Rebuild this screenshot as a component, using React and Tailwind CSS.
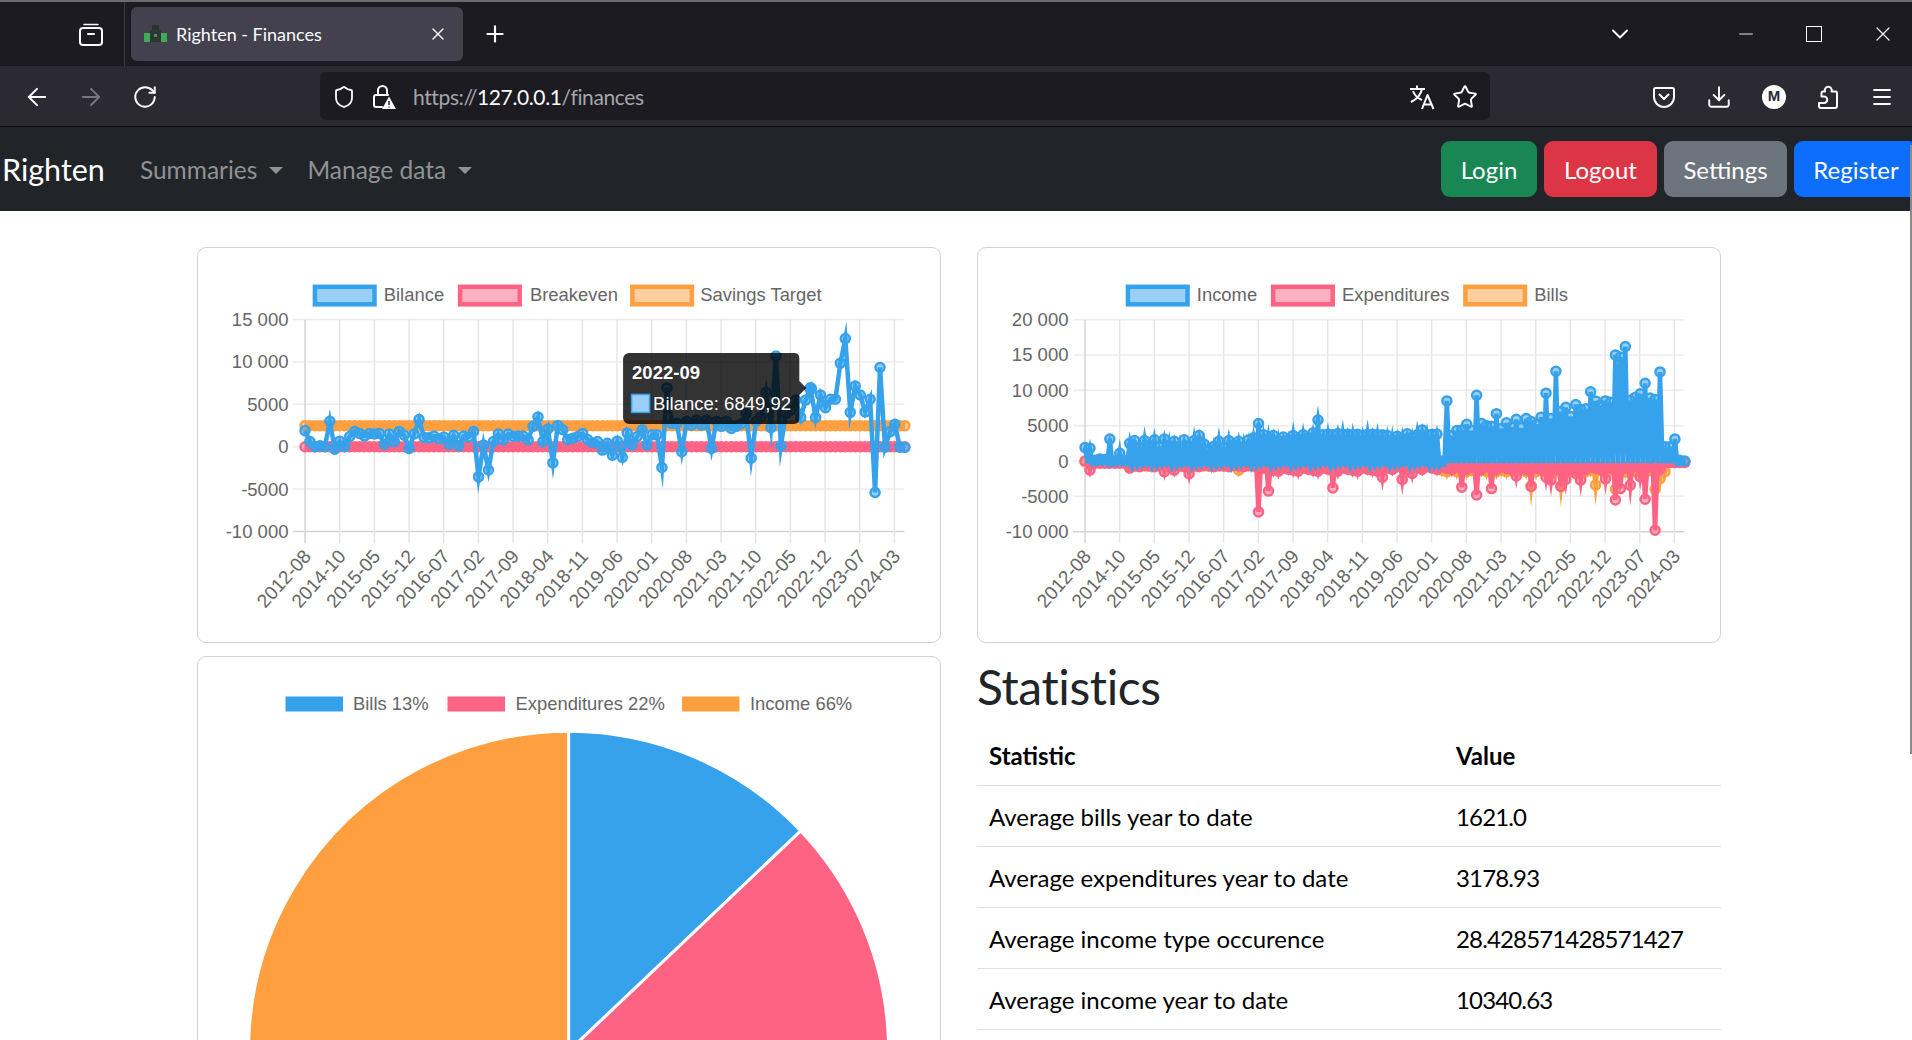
import { ArrowLeft, ArrowRight, RotateCw, Shield, Star, Download, Menu, ChevronDown, Minus, X, Plus } from "lucide-react";

const UI = "font-['Lato',sans-serif]";
const BLUE = "#36a2eb";
const PINK = "#ff6384";
const ORANGE = "#ff9f40";
const LIGHT = { [BLUE]: "rgba(54,162,235,0.5)", [PINK]: "rgba(255,99,132,0.5)", [ORANGE]: "rgba(255,159,64,0.5)" };

const xLabels = ["2012-08", "2014-10", "2015-05", "2015-12", "2016-07", "2017-02", "2017-09", "2018-04", "2018-11", "2019-06", "2020-01", "2020-08", "2021-03", "2021-10", "2022-05", "2022-12", "2023-07", "2024-03"];

const bilance = [1900, 600, 0, 100, 0, 3000, -300, 650, 0, 1200, 1800, 1550, 1250, 1550, 1500, 1550, 300, 1500, 600, 1800, 1350, -200, 1500, 3200, 1100, 1050, 1250, 950, 1150, 300, 1350, 100, 1250, 1150, 1800, -3550, 200, -2750, 600, 1500, 800, 1500, 1200, 1250, 1250, 800, 2400, 3500, 600, 2100, -1900, 2500, 2000, 850, 1000, 1200, 1550, 850, 450, 600, -400, 400, -1000, 650, -1250, 1600, 200, 1200, 2000, 200, 1400, 1400, -2450, 6950, 2750, 2750, -600, 3000, 2550, 3150, 2550, 3150, -200, 3000, 2400, 3000, 2150, 2400, 2700, 3900, -1350, 3000, 3550, 6400, 2250, 10700, 100, 3900, 4300, 5500, 3450, 5500, 6850, 3450, 6100, 4600, 5600, 5600, 9850, 12750, 4050, 7150, 6100, 4100, 5600, -5400, 9350, -50, 1750, 2650, -50, -100];

const income = [1900, 1800, 100, 300, 200, 3100, 0, 1100, 100, 2500, 2900, 1900, 2900, 2200, 3000, 2000, 3100, 2200, 2800, 2000, 3000, 2100, 2900, 3600, 2400, 1600, 2100, 2800, 1900, 2900, 2300, 2800, 2000, 3000, 3300, 5300, 3700, 3200, 3600, 2900, 3400, 3000, 3600, 3100, 3700, 3300, 4000, 5800, 3700, 3800, 3700, 3900, 3800, 3800, 3700, 3800, 3600, 3800, 3800, 3700, 3700, 3600, 3000, 3500, 3200, 3850, 3400, 3700, 4400, 3700, 3800, 3800, 0, 8500, 3600, 4300, 4400, 5200, 4300, 9300, 5300, 5000, 4900, 6700, 4600, 5400, 4800, 5900, 4700, 6000, 5600, 5200, 6200, 9600, 6000, 12700, 7000, 7600, 6300, 8000, 7300, 7400, 9800, 8500, 7900, 8500, 8300, 15000, 14700, 16200, 8600, 9000, 9500, 11000, 8900, 8700, 12600, 2000, 2000, 3100, 100, 0];

const expOverrides = { 0: 0, 1: -1300, 9: -1000, 16: -1500, 18: -1300, 21: -1800, 35: -7200, 37: -4250, 50: -3800, 60: -2300, 64: -2600, 66: -1750, 76: -3700, 79: -4800, 82: -3900, 87: -2100, 90: -3600, 93: -2300, 94: -2700, 96: -3600, 97: -2600, 99: -1750, 100: -2700, 105: -2550, 107: -5500, 108: -3900, 110: -3400, 112: -2200, 113: -5400, 115: -9800 };
const expenditures = income.map((_, i) => {
  if (expOverrides[i] !== undefined) return expOverrides[i];
  if (i < 9) return -300;
  if (i > 116) return -200;
  if (i < 35) return -600 - (i % 3) * 100;
  if (i < 60) return -1000 - (i % 4) * 150;
  return -800 - (i % 3) * 200;
});

const billOverrides = { 31: -1300, 90: -3500, 96: -3500, 103: -3400, 107: -4000, 115: -4000, 116: -2500 };
const bills = income.map((_, i) => {
  if (billOverrides[i] !== undefined) return billOverrides[i];
  if (i < 9 || i > 117) return -100;
  return i < 72 ? -700 : -1300 - (i % 2) * 200;
});

// plain polyline
function linePath(values, left, step, toY) {
  return values.map((v, i) => `${i ? "L" : "M"}${(left + i * step).toFixed(2)} ${toY(v).toFixed(2)}`).join(" ");
}

// the dense series swing back towards zero between two months
function zigzagPath(values, left, step, toY, rest) {
  return values.map((v, i) => {
    const x = left + i * step;
    const back = i < values.length - 1 ? ` L${(x + step / 2).toFixed(2)} ${toY(rest(i)).toFixed(2)}` : "";
    return `${i ? "L" : "M"}${x.toFixed(2)} ${toY(v).toFixed(2)}${back}`;
  }).join(" ");
}

function Series({ d, values, left, step, toY, color, r = 4.5, miter = 10 }) {
  return (
    <g>
      <path d={d} fill="none" stroke={color} strokeWidth="4.5" strokeLinejoin="miter" strokeMiterlimit={miter} />
      {values.map((v, i) => (
        <circle key={i} cx={left + i * step} cy={toY(v)} r={r} fill={LIGHT[color]} stroke={color} strokeWidth="2.5" />
      ))}
    </g>
  );
}

function Axes({ left, ticks, toY }) {
  const right = left + 598.6;
  const step = 34.62;
  return (
    <g fontFamily="'Liberation Sans', sans-serif" fontSize="18.5" fill="#666">
      {ticks.map((t, i) => (
        <g key={t}>
          <line x1={left - 12} x2={right} y1={toY(t)} y2={toY(t)} stroke={i === ticks.length - 1 ? "#d4d4d4" : "#ececec"} strokeWidth="1.5" />
          <text x={left - 16.5} y={toY(t) + 6.5} textAnchor="end">{t.toLocaleString("pl-PL")}</text>
        </g>
      ))}
      {xLabels.map((label, i) => {
        const x = left + i * step;
        return (
          <g key={label}>
            <line x1={x} x2={x} y1="320" y2="543" stroke={i === 0 ? "#d4d4d4" : "#e6e6e6"} strokeWidth="1.5" />
            <text x={x + 7} y="557" fontSize="19" textAnchor="end" transform={`rotate(-48 ${x + 7} 557)`}>{label}</text>
          </g>
        );
      })}
    </g>
  );
}

function LegendBox({ x, width, label, textX, color }) {
  return (
    <g>
      <rect x={x + 2.25} y="287" width={width - 4.5} height="17.5" fill={LIGHT[color]} stroke={color} strokeWidth="4.5" />
      <text x={textX} y="301.500" fontFamily="'Liberation Sans', sans-serif" fontSize="18.4" fill="#666">{label}</text>
    </g>
  );
}

function BilanceChart() {
  const left = 305.4;
  const step = 4.95;
  const toY = (v) => 446.7 - (v / 5000) * 42.35;
  const flat = (v) => bilance.map(() => v);
  const hovered = 102;
  return (
    <svg viewBox="198.5 248.5 741 393" className="w-full h-full block">
      <LegendBox x={313} width={64} label="Bilance" textX={384} color={BLUE} />
      <LegendBox x={458} width={64} label="Breakeven" textX={530} color={PINK} />
      <LegendBox x={630} width={64} label="Savings Target" textX={700} color={ORANGE} />
      <Axes left={left} ticks={[15000, 10000, 5000, 0, -5000, -10000]} toY={toY} />
      <Series d={linePath(flat(2480), left, step, toY)} values={flat(2480)} left={left} step={step} toY={toY} color={ORANGE} />
      <Series d={linePath(flat(0), left, step, toY)} values={flat(0)} left={left} step={step} toY={toY} color={PINK} />
      <Series d={linePath(bilance, left, step, toY)} values={bilance} left={left} step={step} toY={toY} color={BLUE} />
      <circle cx={left + hovered * step} cy={toY(bilance[hovered])} r="6.5" fill={BLUE} />
      <path d="M629 353H794a5 5 0 0 1 5 5V381L806 388L799 395V419a5 5 0 0 1 -5 5H629a6 6 0 0 1 -6 -6V359a6 6 0 0 1 6 -6Z" fill="rgba(0,0,0,0.8)" />
      <g fontFamily="'Liberation Sans', sans-serif" fontSize="18.5" fill="#fff">
        <text x="632" y="379" fontWeight="700">2022-09</text>
        <rect x="631.5" y="394.5" width="18" height="18" fill="#9ad0f5" stroke={BLUE} strokeWidth="1.5" />
        <text x="653" y="410">Bilance: 6849,92</text>
      </g>
    </svg>
  );
}

function FlowChart() {
  const left = 1085.4;
  const step = 4.95;
  const toY = (v) => 461 - (v / 5000) * 35.3;
  const incomeRest = (i) => (i > 8 && i < 72 ? -600 : -300);
  const spike = (x, base, tip) => `M${(x - 3).toFixed(2)} ${toY(base).toFixed(2)} L${x.toFixed(2)} ${toY(tip).toFixed(2)} L${(x + 3).toFixed(2)} ${toY(base).toFixed(2)} Z`;
  // thin peaks above and below the dense part of the income line
  const dense = income.map((v, i) => ({ i, v })).filter(({ i, v }) => i < 72 && v > 1000);
  const peaks = dense.map(({ i, v }) => spike(left + i * step, v - 600, v + 700 + ((i * 7) % 5) * 350)).join(" ");
  const dips = dense.filter(({ i }) => i > 8).map(({ i }) => spike(left + (i + 0.5) * step, -500, -1000 - ((i * 3) % 4) * 250)).join(" ");
  return (
    <svg viewBox="978.5 248.5 741 393" className="w-full h-full block">
      <LegendBox x={1126} width={64} label="Income" textX={1197} color={BLUE} />
      <LegendBox x={1271} width={64} label="Expenditures" textX={1342} color={PINK} />
      <LegendBox x={1463} width={64} label="Bills" textX={1534} color={ORANGE} />
      <Axes left={left} ticks={[20000, 15000, 10000, 5000, 0, -5000, -10000]} toY={toY} />
      <Series d={zigzagPath(bills, left, step, toY, () => -200)} values={bills} left={left} step={step} toY={toY} color={ORANGE} />
      <Series d={zigzagPath(expenditures, left, step, toY, () => -100)} values={expenditures} left={left} step={step} toY={toY} color={PINK} />
      <Series d={zigzagPath(income, left, step, toY, incomeRest)} values={income} left={left} step={step} toY={toY} color={BLUE} miter={4} />
      <path d={`${peaks} ${dips}`} fill={BLUE} />
    </svg>
  );
}

function slice(cx, cy, r, from, to) {
  const pt = (deg) => {
    const a = ((deg - 90) * Math.PI) / 180;
    return `${(cx + r * Math.cos(a)).toFixed(2)} ${(cy + r * Math.sin(a)).toFixed(2)}`;
  };
  return `M${cx} ${cy} L${pt(from)} A${r} ${r} 0 ${to - from > 180 ? 1 : 0} 1 ${pt(to)} Z`;
}

function PieChart() {
  const cx = 568.6;
  const cy = 1051.7;
  const r = 320;
  const legend = [
    { x: 285.5, color: BLUE, label: "Bills 13%", textX: 353 },
    { x: 447.5, color: PINK, label: "Expenditures 22%", textX: 515.5 },
    { x: 682, color: ORANGE, label: "Income 66%", textX: 750 },
  ];
  return (
    <svg viewBox="198.5 657.5 741 700" className="w-full h-[700px] block">
      {legend.map((l) => (
        <g key={l.label}>
          <rect x={l.x} y="697" width="57.5" height="15" fill={l.color} />
          <text x={l.textX} y="710.5" fontFamily="'Liberation Sans', sans-serif" fontSize="18.4" fill="#666">{l.label}</text>
        </g>
      ))}
      <path d={slice(cx, cy, r, 0, 46.5)} fill={BLUE} stroke="#fff" strokeWidth="3" />
      <path d={slice(cx, cy, r, 46.5, 122.4)} fill={PINK} stroke="#fff" strokeWidth="3" />
      <path d={slice(cx, cy, r, 122.4, 360)} fill={ORANGE} stroke="#fff" strokeWidth="3" />
    </svg>
  );
}

function FirefoxView() {
  return (
    <svg width="24" height="24" viewBox="0 0 24 24" fill="none" stroke="#fbfbfe" strokeWidth="2" strokeLinecap="round" strokeLinejoin="round">
      <path d="M5 2.5h14" strokeWidth="1.5" />
      <rect x="1" y="6" width="22" height="17" rx="3" />
      <path d="M9 12h6" />
    </svg>
  );
}

function Favicon() {
  return (
    <svg width="25" height="22" viewBox="0 0 25 22">
      <rect x="9" y="2" width="7" height="6" fill="#26352a" />
      <rect x="7" y="7" width="11" height="12" fill="#2b3a30" />
      <rect x="1" y="10" width="6" height="9" fill="#3fa85a" />
      <rect x="18" y="10" width="6" height="9" fill="#3fa85a" />
      <rect x="11" y="11" width="3" height="3" fill="#6b7a70" />
    </svg>
  );
}

function InsecureLock() {
  return (
    <svg width="24" height="26" viewBox="0 0 24 26" fill="none">
      <path d="M6 11V6.5a4.5 4.5 0 0 1 9 0V11" stroke="#fbfbfe" strokeWidth="2" />
      <path d="M10 23H4a2 2 0 0 1 -2 -2v-8a2 2 0 0 1 2 -2h12" stroke="#fbfbfe" strokeWidth="2" strokeLinecap="round" />
      <path d="M17 12.5L24 25H10Z" fill="#fbfbfe" />
      <path d="M17 17v4M17 22.5v1" stroke="#2b2a33" strokeWidth="1.5" />
    </svg>
  );
}

function Translate() {
  return (
    <svg width="26" height="26" viewBox="0 0 26 26" fill="none" stroke="#fbfbfe" strokeWidth="2" strokeLinejoin="round">
      <path d="M1 5h15M8 1.5V5M13 5c-1 5-5 10-11 13M4 7c1.5 4 4 7 9 9" />
      <path d="M13 25l5.5-14L24.500 25M15 20.500h7.500" />
    </svg>
  );
}

function Pocket() {
  return (
    <svg width="24" height="24" viewBox="0 0 24 24" fill="none" stroke="#fbfbfe" strokeWidth="2" strokeLinecap="round" strokeLinejoin="round">
      <path d="M3.500 3h17A1.500 1.500 0 0 1 22 4.500V12a10 10 0 0 1 -20 0V4.500A1.500 1.500 0 0 1 3.500 3Z" />
      <path d="M7.500 9.500L12 14l4.500 -4.500" />
    </svg>
  );
}

function Avatar() {
  return (
    <div className="w-[24px] h-[24px] rounded-full bg-white flex items-center justify-center text-[15px] font-bold text-[#2b2a33] font-['Liberation_Sans',sans-serif]">M</div>
  );
}

function Extensions() {
  return (
    <svg width="24" height="26" viewBox="0 0 24 26" fill="none" stroke="#fbfbfe" strokeWidth="2" strokeLinejoin="round">
      <path d="M4 24h15a2 2 0 0 0 2 -2V9a1.500 1.500 0 0 0 -1.500 -1.500H15.500a3.500 3.500 0 1 0 -6.500 0H7a1.500 1.500 0 0 0 -1.500 1.500v3.500H8a3 3 0 0 1 0 6.500H3v3.500a1 1 0 0 0 1 1Z" />
    </svg>
  );
}

function BrowserChrome() {
  return (
    <div className={`${UI} shrink-0 text-[#fbfbfe]`}>
      <div className="h-[2px] bg-[#6b6b6b]" />
      <div className="h-[64px] bg-[#1c1b22] flex items-center">
        <div className="w-[125px] h-full border-r border-[#3a3a42] flex items-center justify-end pr-[21px]">
          <FirefoxView />
        </div>
        <div className="ml-[6px] w-[332px] h-[54px] rounded-[6px] bg-[#42414d] flex items-center pl-[12px] pr-[15px]">
          <Favicon />
          <span className="ml-[8px] text-[18px] whitespace-nowrap">Righten - Finances</span>
          <X size={20} strokeWidth={1.6} className="ml-auto" />
        </div>
        <Plus size={26} strokeWidth={2} className="ml-[19px]" />
        <ChevronDown size={28} strokeWidth={1.6} className="ml-auto mr-[101px]" />
        <Minus size={22} strokeWidth={1} className="mr-[49px]" />
        <div className="w-[16px] h-[16px] border border-[#fbfbfe] mr-[49px]" />
        <X size={24} strokeWidth={1.2} className="mr-[17px]" />
      </div>
      <div className="h-[61px] bg-[#2b2a33] border-b border-[#0c0c0d] flex items-center">
        <div className="flex items-center pt-[2px]">
          <ArrowLeft size={28} strokeWidth={1.7} className="ml-[23px]" />
          <ArrowRight size={28} strokeWidth={1.7} className="ml-[26px] text-[#77767d]" />
          <RotateCw size={26} strokeWidth={1.8} className="ml-[27px]" />
        </div>
        <div className="ml-[162px] w-[1170px] h-[48px] rounded-[6px] bg-[#1c1b22] flex items-center pl-[12px] pr-[12px] pt-[2px]">
          <Shield size={24} strokeWidth={1.8} />
          <div className="ml-[16px]"><InsecureLock /></div>
          <span className="ml-[17px] text-[21px] tracking-[-0.38px] text-[#a6a6ab] whitespace-nowrap">https://<span className="text-[#fbfbfe]">127.0.0.1</span>/finances</span>
          <div className="ml-auto flex items-center gap-[17px]">
            <Translate />
            <Star size={26} strokeWidth={1.8} />
          </div>
        </div>
        <div className="ml-auto flex items-center gap-[30px] mr-[18px] pt-[1px]">
          <Pocket />
          <Download size={26} strokeWidth={1.8} />
          <Avatar />
          <Extensions />
          <Menu size={24} strokeWidth={1.8} />
        </div>
      </div>
    </div>
  );
}

function NavDropdown({ label }) {
  return (
    <div className="flex items-center px-[12px] text-[24.5px] text-[#909294]">
      {label}
      <span className="ml-[12px] border-x-[7px] border-x-transparent border-t-[7px] border-t-[#909294]" />
    </div>
  );
}

function Navbar() {
  return (
    <nav className={`${UI} shrink-0 h-[84px] bg-[#212529] flex items-center pl-[2px] pt-[2px]`}>
      <span className="text-[30.5px] text-white mr-[23px]">Righten</span>
      <NavDropdown label="Summaries" />
      <NavDropdown label="Manage data" />
      <div className="ml-auto mr-[-6px] flex items-center gap-[7px] text-[24px] text-white mt-[-2px]">
        <button className="w-[96px] h-[56px] rounded-[9px] bg-[#198754] pt-[2px]">Login</button>
        <button className="w-[113px] h-[56px] rounded-[9px] bg-[#dc3545] pt-[2px]">Logout</button>
        <button className="w-[123px] h-[56px] rounded-[9px] bg-[#6c757d] pt-[2px]">Settings</button>
        <button className="w-[124px] h-[56px] rounded-[9px] bg-[#0d6efd] pt-[2px]">Register</button>
      </div>
    </nav>
  );
}

const stats = [
  ["Average bills year to date", "1621.0"],
  ["Average expenditures year to date", "3178.93"],
  ["Average income type occurence", "28.428571428571427"],
  ["Average income year to date", "10340.63"],
];

function StatsTable() {
  return (
    <table className="w-full border-collapse text-[24px] text-black table-fixed">
      <thead>
        <tr className="h-[61px] border-b-[1.5px] border-[#dee2e6]">
          <th className="w-[467px] px-[12px] pt-[4px] text-left font-bold">Statistic</th>
          <th className="px-[12px] pt-[4px] text-left font-bold">Value</th>
        </tr>
      </thead>
      <tbody>
        {stats.map(([name, value]) => (
          <tr key={name} className="h-[61px] border-b-[1.5px] border-[#dee2e6]">
            <td className="px-[12px] pt-[2px]">{name}</td>
            <td className="px-[12px] pt-[2px] tracking-[-0.85px]">{value}</td>
          </tr>
        ))}
      </tbody>
    </table>
  );
}

export default function App() {
  return (
    <div className="relative h-screen flex flex-col overflow-hidden bg-white">
      <BrowserChrome />
      <Navbar />
      <main className={`${UI} ml-[197px] w-[1524px] mt-[36px] flex gap-[36px]`}>
        <div className="w-[744px] shrink-0 flex flex-col gap-[13px]">
          <div className="h-[396px] rounded-[9px] border-[1.5px] border-[#d2d2d2] overflow-hidden">
            <BilanceChart />
          </div>
          <div className="rounded-[9px] border-[1.5px] border-[#d2d2d2] overflow-hidden">
            <PieChart />
          </div>
        </div>
        <div className="w-[744px] shrink-0 flex flex-col">
          <div className="h-[396px] rounded-[9px] border-[1.5px] border-[#d2d2d2] overflow-hidden">
            <FlowChart />
          </div>
          <h2 className="mt-[8px] mb-[1px] text-[48px] tracking-[-0.4px] leading-[72px] text-[#212529]">Statistics</h2>
          <StatsTable />
        </div>
      </main>
      <div className="absolute right-0 top-[145px] w-[2px] h-[609px] bg-[#8a8a8a]" />
    </div>
  );
}
